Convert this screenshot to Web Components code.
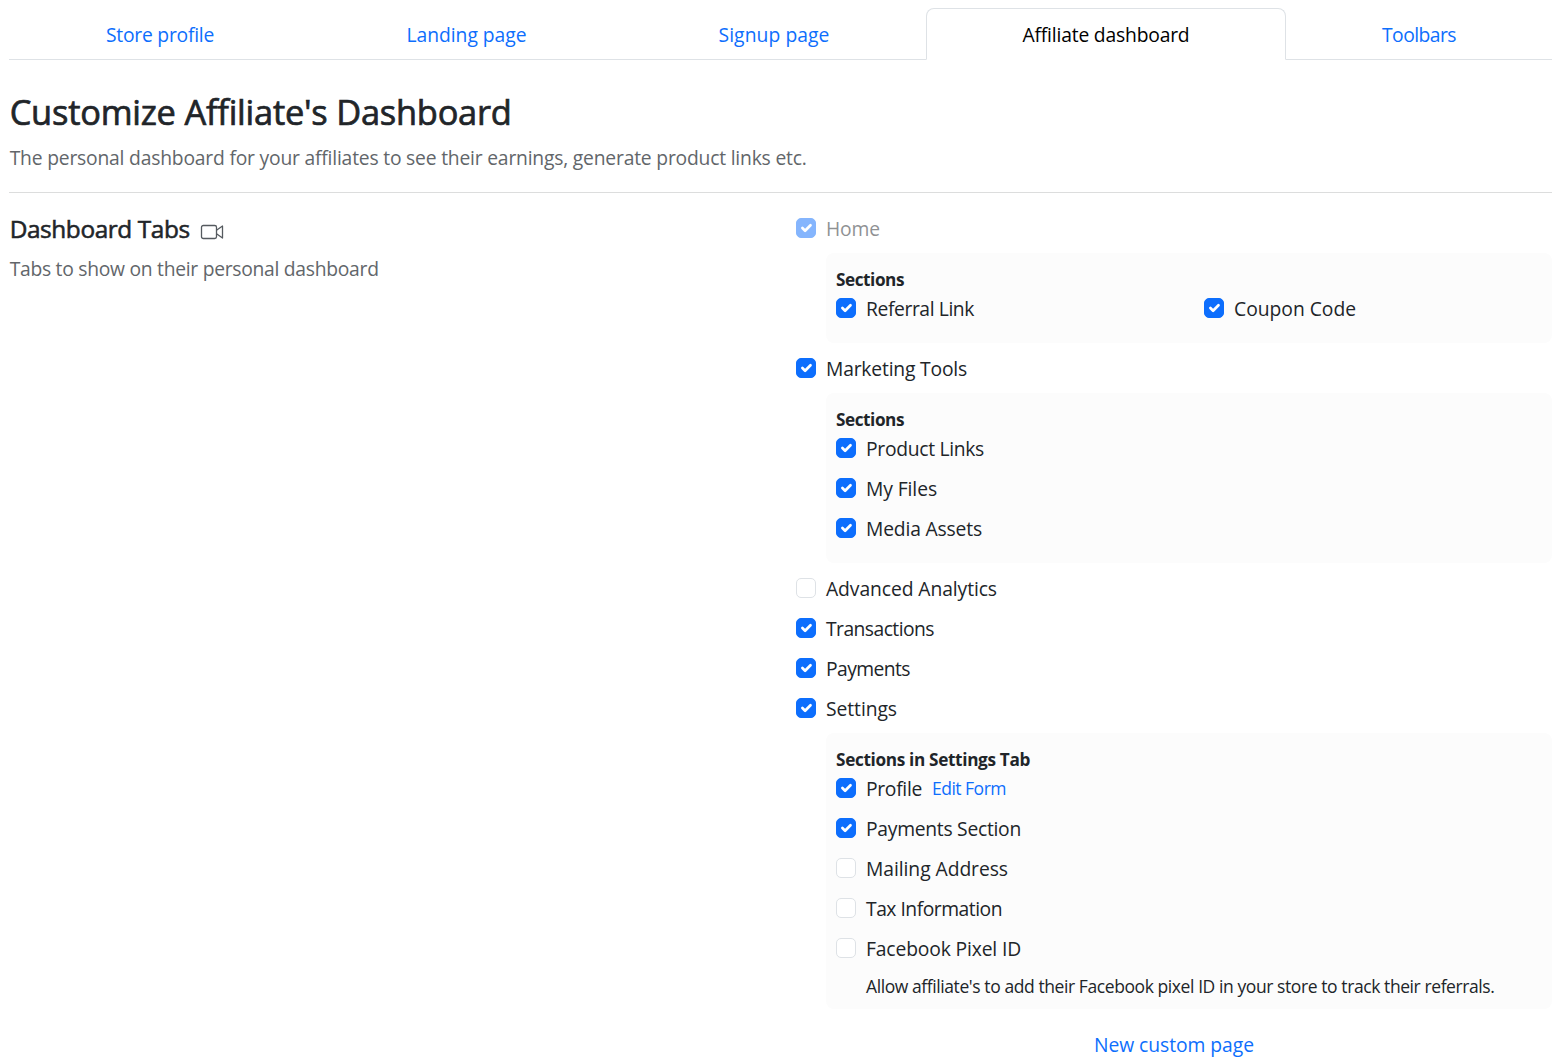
<!DOCTYPE html>
<html lang="en">
<head>
<meta charset="utf-8">
<title>Affiliate dashboard</title>
<style>
body{margin:0;background:#fff;color:#212529;font:19.3px/24px "Open Sans","Noto Sans",sans-serif}
</style>
</head>
<body>
<affiliate-settings></affiliate-settings>
<script>
const define=(name,html,setup)=>{
  const t=document.createElement('template');t.innerHTML=html;
  customElements.define(name,class extends HTMLElement{
    constructor(){super();this.attachShadow({mode:'open'}).append(t.content.cloneNode(true));}
    connectedCallback(){if(setup)setup(this,this.shadowRoot);}
  });
};

/* Text label tracked to a given advance width */
define('fit-text',`<style>:host{display:inline-block;white-space:nowrap;vertical-align:top}</style><slot></slot>`,el=>{
  const w=+el.getAttribute('w'),n=el.textContent.length;
  el.style.letterSpacing='0.001px';
  const natural=el.getBoundingClientRect().width;
  el.style.letterSpacing=((w-natural)/n)+'px';
});

define('tab-item',`<style>
:host{display:flex;justify-content:center;box-sizing:border-box;height:52px;padding-top:15px;color:#0d6efd;border-bottom:1px solid #dee2e6;cursor:pointer}
:host([active]){color:#000;border:1px solid #dee2e6;border-bottom-color:#fff;border-radius:8px 8px 0 0;padding-top:14px}
</style><slot></slot>`,el=>{el.style.flex=el.getAttribute('size')+' 1 0px';});

define('tab-bar',`<style>:host{display:flex}</style><slot></slot>`);

define('check-row',`<style>
:host{display:flex;align-items:center;height:20px;gap:10px}
:host([disabled]){opacity:.5}
.box{box-sizing:border-box;flex:none;width:20px;height:20px;border:1px solid #dee2e6;border-radius:5px;background:#fff}
svg{display:none;width:18px;height:18px}
:host([checked]) .box{background:#0d6efd;border-color:#0d6efd}
:host([checked]) svg{display:block}
.t{display:flex;gap:10px;padding-top:2px}
</style><span class="box"><svg viewBox="0 0 20 20" fill="none" stroke="#fff" stroke-width="3" stroke-linecap="round" stroke-linejoin="round"><path d="M6 10l3 3l6-6"/></svg></span><span class="t"><slot></slot></span>`);

define('section-panel',`<style>
:host{display:flex;flex-direction:column;gap:20px;margin:-5px 0 -5px 30px;padding:15px 10px 25px;background:#fcfcfc;border-radius:8px}
.h{font-size:17.2px;font-weight:700;line-height:24px;margin-bottom:-14px}
</style><div class="h"><slot name="title"></slot></div><slot></slot>`);

define('camera-icon',`<style>:host{display:block;width:24px;height:16px}svg{display:block}</style>
<svg width="24" height="16" viewBox="0 0 24 16" fill="none" stroke="#555a5f" stroke-width="1.3" stroke-linejoin="round"><rect x="1.5" y="1.5" width="15" height="13" rx="1.8"/><path d="M16.5 6.2L22.5 2v12l-6-4.2"/></svg>`);

define('affiliate-settings',`<style>
:host{display:block;padding:8px 10px 0 9px}
.head{padding:30px 0 0 0;height:102px;border-bottom:1px solid #dcdddd;display:flex;flex-direction:column}
h1{margin:0;font-size:34.4px;font-weight:500;line-height:44px;-webkit-text-stroke:.7px currentColor}
h2{margin:0;font-size:24.4px;font-weight:500;line-height:30px;-webkit-text-stroke:.55px currentColor}
h1,h2,.muted{padding-left:.7px}
.muted{color:#62666a}
.sub{margin-top:12px}
.body{display:flex;padding-top:25px}
.left{flex:none;width:787px}
.row{display:flex;gap:10px}
.left .muted{margin-top:17px}
.left .row{height:26px;margin-top:-4px}
camera-icon{margin-top:10px}
.right{flex:1;display:flex;flex-direction:column;gap:20px}
.two{display:grid;grid-template-columns:368px 1fr}
.small{font-size:17.5px}
.link{color:#0d6efd}
check-row .small{margin-top:-1px}
.help{margin:-4px 0 -14px 30px;line-height:24px}
.new{text-align:center;margin-top:9px}
</style>
<tab-bar>
<tab-item size="302"><fit-text w="108">Store profile</fit-text></tab-item>
<tab-item size="311"><fit-text w="120">Landing page</fit-text></tab-item>
<tab-item size="304"><fit-text w="111">Signup page</fit-text></tab-item>
<tab-item size="358" active><fit-text w="167">Affiliate dashboard</fit-text></tab-item>
<tab-item size="266"><fit-text w="74">Toolbars</fit-text></tab-item>
</tab-bar>
<div class="head"><h1><fit-text w="502">Customize Affiliate's Dashboard</fit-text></h1>
<div class="muted sub"><fit-text w="797">The personal dashboard for your affiliates to see their earnings, generate product links etc.</fit-text></div></div>
<div class="body">
<div class="left"><div class="row"><h2><fit-text w="180">Dashboard Tabs</fit-text></h2><camera-icon></camera-icon></div>
<div class="muted"><fit-text w="369">Tabs to show on their personal dashboard</fit-text></div></div>
<div class="right">
<check-row checked disabled><fit-text w="54">Home</fit-text></check-row>
<section-panel><fit-text slot="title" w="68">Sections</fit-text>
<div class="two"><check-row checked><fit-text w="108">Referral Link</fit-text></check-row><check-row checked><fit-text w="122">Coupon Code</fit-text></check-row></div></section-panel>
<check-row checked><fit-text w="141">Marketing Tools</fit-text></check-row>
<section-panel><fit-text slot="title" w="68">Sections</fit-text>
<check-row checked><fit-text w="118">Product Links</fit-text></check-row>
<check-row checked><fit-text w="71">My Files</fit-text></check-row>
<check-row checked><fit-text w="116">Media Assets</fit-text></check-row></section-panel>
<check-row><fit-text w="171">Advanced Analytics</fit-text></check-row>
<check-row checked><fit-text w="108">Transactions</fit-text></check-row>
<check-row checked><fit-text w="84">Payments</fit-text></check-row>
<check-row checked><fit-text w="71">Settings</fit-text></check-row>
<section-panel><fit-text slot="title" w="194">Sections in Settings Tab</fit-text>
<check-row checked><fit-text w="56">Profile</fit-text><fit-text class="small link" w="74">Edit Form</fit-text></check-row>
<check-row checked><fit-text w="155">Payments Section</fit-text></check-row>
<check-row><fit-text w="142">Mailing Address</fit-text></check-row>
<check-row><fit-text w="136">Tax Information</fit-text></check-row>
<check-row><fit-text w="155">Facebook Pixel ID</fit-text></check-row>
<div class="help small"><fit-text w="628.5">Allow affiliate's to add their Facebook pixel ID in your store to track their referrals.</fit-text></div></section-panel>
<div class="new link"><fit-text w="160">New custom page</fit-text></div>
</div></div>`);
</script>
</body>
</html>
